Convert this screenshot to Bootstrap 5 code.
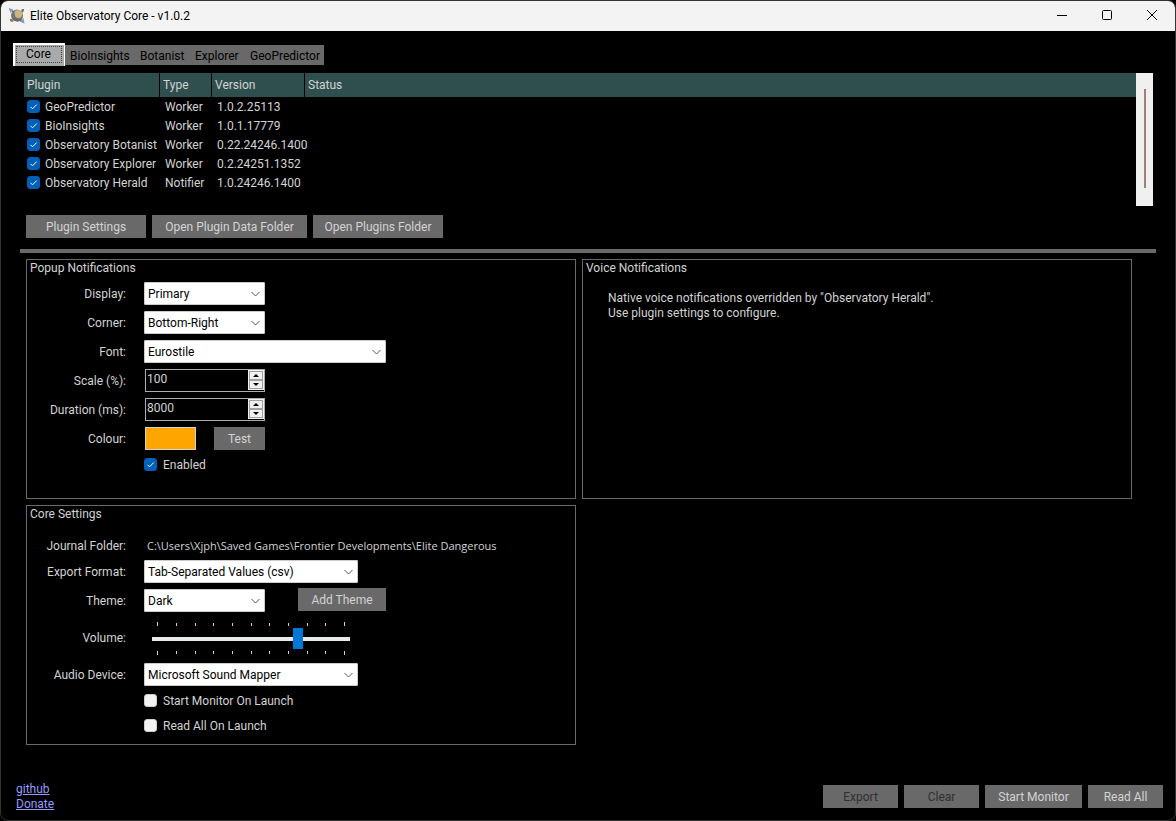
<!DOCTYPE html>
<html lang="en">
<head>
<meta charset="utf-8">
<meta name="viewport" content="width=device-width, initial-scale=1">
<title>Elite Observatory Core - v1.0.2</title>
<link href="https://cdn.jsdelivr.net/npm/bootstrap@5.3.0/dist/css/bootstrap.min.css" rel="stylesheet">
<style>
  html { background: #000; }
  body {
    font-family: Roboto, "Open Sans", sans-serif;
    font-size: 12px;
    line-height: 16px;
    color: #d3d3d3;
    background: #000;
  }
  .app-window { border: 1px solid #333; border-radius: 8px; overflow: hidden; }
  .title-bar { height: 30px; background: #f3f3f3; color: #000; padding: 0 1px 0 8px; }
  .app-icon { margin-right: 5px; }
  .win-btn { width: 45px; height: 30px; border: 0; background: none; padding: 0 0 3px; color: #000; }

  .tab-strip { padding: 12px 12px 0; height: 42px; }
  .tab-strip .nav-link {
    height: 20px; margin-top: 2px; padding: 2px 0 0 5px; border: 0; border-radius: 0;
    background: #696969; color: #000; line-height: 16px; white-space: nowrap; text-align: left;
  }
  .tab-strip .nav-link.active {
    width: 52px; height: 23px; margin: 0; padding: 0 2px 3px 0; background: #a9a9a9; color: #000;
    border: 2px solid #fff; border-right: 1px solid #fff; border-bottom: 0;
    outline: 1px dotted #444; outline-offset: -4px; text-align: center;
  }
  .tab-a { width: 70px; } .tab-b { width: 55px; } .tab-c { width: 55px; } .tab-d { width: 79px; }

  .plugin-area { margin: 0 22px 0 23px; height: 133px; }
  .plugin-table { table-layout: fixed; width: 100%; border-collapse: separate; border-spacing: 0; }
  .plugin-table th {
    height: 24px; padding: 0 3px; font-weight: 400; background: #2f4f4f; border-right: 1px solid #000;
  }
  .plugin-table th:last-child { border-right: 0; }
  .plugin-table td { height: 19px; padding: 0 5px; white-space: nowrap; }
  .plugin-table td:first-child { padding: 0 3px; }
  .plugin-table label { gap: 5px; }
  .scroll-rail { width: 17px; background: #f0f0f0; padding: 16px 0 18px; }
  .scroll-thumb { width: 2px; background: #a08075; }

  .tick {
    appearance: none; width: 13px; height: 13px; margin: 0; border: 1px solid #ccc; border-radius: 3px;
    background: #f3f3f3 center / 11px 11px no-repeat; flex: none;
  }
  .tick:checked {
    border-color: #005fb8; background-color: #005fb8;
    background-image: url("data:image/svg+xml,%3Csvg xmlns='http://www.w3.org/2000/svg' viewBox='0 0 11 11'%3E%3Cpath d='M2.5 5.8 4.5 7.8 8.7 3.6' fill='none' stroke='%23fff' stroke-width='1'/%3E%3C/svg%3E");
  }

  .btn-flat {
    height: 23px; padding: 0; border: 0; border-radius: 0; background: #696969; color: #d3d3d3;
    font-size: 12px; line-height: 24px; white-space: nowrap;
  }
  .btn-flat:disabled { background: #696969; color: #303030; opacity: 1; }
  .btn-flat:hover { background: #777; color: #fff; }
  .w-51 { width: 51px; } .w-75px { width: 75px; } .w-88 { width: 88px; } .w-97 { width: 97px; }
  .w-120 { width: 120px; } .w-130 { width: 130px; } .w-155 { width: 155px; }
  .gap-6 { gap: 6px; }

  .plugin-actions { padding: 9px 25px 11px; }
  .splitter { height: 4px; margin: 0 19px; background: #696969; }

  .panels { padding: 6px 43px 0 25px; }
  .panel-row { --bs-gutter-x: 6px; --bs-gutter-y: 6px; }
  .group-box { min-height: 240px; height: 100%; border: 1px solid #696969; padding: 0 3px; }
  .group-box legend { float: left; width: 100%; font-size: 12px; line-height: 16px; margin: 0; }
  .group-box legend + * { clear: left; }
  .form-grid {
    display: grid; grid-template-columns: 96px minmax(0, 1fr); column-gap: 18px; row-gap: 6px; align-items: center;
  }
  .form-grid > label, .form-grid > .row-label { text-align: right; white-space: nowrap; }
  .popup-grid { padding-top: 6px; }
  .core-grid { padding-top: 15px; }
  .line { display: flex; align-items: center; height: 23px; }
  .journal-line { height: 17px; padding-left: 3px; font-family: "Open Sans", sans-serif; font-size: 11px; }
  .check-line { grid-column: 2; height: 17px; gap: 6px; }
  .check-line + .check-line { margin-top: 2px; }

  .combo {
    appearance: none; height: 23px; padding: 1px 22px 0 3px; border: 1px solid #ccc; border-radius: 1px; color: #000;
    font-size: 12px; line-height: 20px;
    background: #fff url("data:image/svg+xml,%3Csvg xmlns='http://www.w3.org/2000/svg' viewBox='0 0 9 6'%3E%3Cpath d='M.5 1 4.5 5 8.5 1' fill='none' stroke='%23555' stroke-width='1'/%3E%3C/svg%3E") right 4px center / 9px 6px no-repeat;
  }
  .combo-s { width: 121px; } .combo-m { width: 214px; } .combo-l { width: 242px; }
  .theme-btn { margin: 0 0 2px 33px; }

  .spin-box { width: 120px; height: 23px; margin-left: 1px; border: 1px solid #abadb3; }
  .spin-box input {
    appearance: textfield; width: 0; flex: 1; border: 0; padding: 0 0 3px 1px; background: #000; color: #d3d3d3;
    font-size: 12px; line-height: 16px; outline: 0;
  }
  .spin-box input::-webkit-inner-spin-button { appearance: none; margin: 0; }
  .spinner-col { width: 16px; height: 20px; padding: 1px; background: #f0f0f0; }
  .spinner-col button {
    height: 9px; padding: 0; border: 1px solid #a0a0a0; background: #f0f0f0; line-height: 0;
    display: flex; align-items: center; justify-content: center;
  }
  .swatch { appearance: none; width: 51px; height: 23px; padding: 0; margin-left: 1px; margin-right: 18px; border: 1px solid #d3d3d3; background: orange; }
  .swatch::-webkit-color-swatch-wrapper { padding: 0; }
  .swatch::-webkit-color-swatch { border: 0; border-radius: 0; }

  .volume { width: 198px; margin-left: 8px; }
  .volume svg { display: block; }
  .volume input { appearance: none; display: block; width: 198px; height: 21px; margin: 2px 0 0; background: none; }
  .volume input::-webkit-slider-runnable-track { height: 4px; background: #e7eaea; }
  .volume input::-webkit-slider-thumb { appearance: none; width: 10px; height: 21px; margin-top: -9px; background: #0078d7; }

  .voice-text { padding: 15px 22px; line-height: 15px; }
  .bottom-bar { padding: 0 12px 8px 15px; }
  .bottom-bar a { color: #99f; line-height: 15px; }
  .bottom-actions { margin-bottom: 4px; }
</style>
</head>
<body>
<div class="app-window d-flex flex-column min-vh-100">
  <header class="title-bar d-flex align-items-center">
    <svg class="app-icon" width="16" height="16" viewBox="0 0 16 16" aria-hidden="true">
      <path d="M12 3l1-2 2 0 0 2-2 2zM1 11l2 0 2 2-2 1-2-1z" fill="#77777b"/>
      <circle cx="8" cy="7.500" r="6" fill="#8e774f"/>
      <circle cx="9.200" cy="6" r="4" fill="#c9b586"/>
      <path d="M2.500 7q2 4 6 4.500T14 8q-.5 5-5 5.500-6-.5-6.500-6.500" fill="#75664d"/>
      <path d="M.5 1 4 3.500 6 9.500 14.500 14.500" stroke="#5470a8" stroke-width="1.300" fill="none"/>
      <path d="M0 0l4 1.500L1.500 5zM12 13l2.500-3L15.500 16z" fill="#7f9bc4"/>
    </svg>
    <span class="me-auto">Elite Observatory Core - v1.0.2</span>
    <button class="win-btn" aria-label="Minimize"><svg width="10" height="10" viewBox="0 0 10 10"><path d="M0 5.500h10" stroke="#000"/></svg></button>
    <button class="win-btn" aria-label="Maximize"><svg width="10" height="10" viewBox="0 0 10 10"><rect x=".5" y=".5" width="9" height="9" rx="1" fill="none" stroke="#000"/></svg></button>
    <button class="win-btn" aria-label="Close"><svg width="10" height="10" viewBox="0 0 10 10"><path d="M0 0l10 10M10 0L0 10" stroke="#000"/></svg></button>
  </header>

  <nav class="tab-strip d-flex" role="tablist">
    <button class="nav-link active" role="tab" aria-selected="true">Core</button>
    <button class="nav-link tab-a" role="tab">BioInsights</button>
    <button class="nav-link tab-b" role="tab">Botanist</button>
    <button class="nav-link tab-c" role="tab">Explorer</button>
    <button class="nav-link tab-d" role="tab">GeoPredictor</button>
  </nav>

  <main class="flex-grow-1">
    <section class="plugin-area d-flex">
      <div class="flex-fill">
        <table class="plugin-table">
          <colgroup><col style="width:136px"><col style="width:52px"><col style="width:93px"><col></colgroup>
          <thead><tr><th>Plugin</th><th>Type</th><th>Version</th><th>Status</th></tr></thead>
          <tbody>
            <tr><td><label class="d-flex align-items-center"><input type="checkbox" class="tick" checked>GeoPredictor</label></td><td>Worker</td><td>1.0.2.25113</td><td></td></tr>
            <tr><td><label class="d-flex align-items-center"><input type="checkbox" class="tick" checked>BioInsights</label></td><td>Worker</td><td>1.0.1.17779</td><td></td></tr>
            <tr><td><label class="d-flex align-items-center"><input type="checkbox" class="tick" checked>Observatory Botanist</label></td><td>Worker</td><td>0.22.24246.1400</td><td></td></tr>
            <tr><td><label class="d-flex align-items-center"><input type="checkbox" class="tick" checked>Observatory Explorer</label></td><td>Worker</td><td>0.2.24251.1352</td><td></td></tr>
            <tr><td><label class="d-flex align-items-center"><input type="checkbox" class="tick" checked>Observatory Herald</label></td><td>Notifier</td><td>1.0.24246.1400</td><td></td></tr>
          </tbody>
        </table>
      </div>
      <div class="scroll-rail d-flex flex-shrink-0 justify-content-center"><div class="scroll-thumb"></div></div>
    </section>

    <div class="plugin-actions d-flex gap-6">
      <button class="btn btn-flat w-120">Plugin Settings</button>
      <button class="btn btn-flat w-155">Open Plugin Data Folder</button>
      <button class="btn btn-flat w-130">Open Plugins Folder</button>
    </div>
    <div class="splitter"></div>

    <div class="panels">
      <div class="row row-cols-2 panel-row mt-0">
        <div class="col mt-0">
          <fieldset class="group-box">
            <legend>Popup Notifications</legend>
            <div class="form-grid popup-grid">
              <label for="display">Display:</label>
              <div class="line"><select id="display" class="combo combo-s"><option>Primary</option></select></div>
              <label for="corner">Corner:</label>
              <div class="line"><select id="corner" class="combo combo-s"><option>Bottom-Right</option></select></div>
              <label for="font">Font:</label>
              <div class="line"><select id="font" class="combo combo-l"><option>Eurostile</option></select></div>
              <label for="scale">Scale (%):</label>
              <div class="line"><div class="spin-box d-flex"><input id="scale" type="number" value="100">
                <div class="spinner-col d-flex flex-column">
                  <button aria-label="Increase scale"><svg width="6" height="3"><path d="M0 3 3 0l3 3z"/></svg></button>
                  <button aria-label="Decrease scale"><svg width="6" height="3"><path d="M0 0h6L3 3z"/></svg></button>
                </div></div></div>
              <label for="duration">Duration (ms):</label>
              <div class="line"><div class="spin-box d-flex"><input id="duration" type="number" value="8000">
                <div class="spinner-col d-flex flex-column">
                  <button aria-label="Increase duration"><svg width="6" height="3"><path d="M0 3 3 0l3 3z"/></svg></button>
                  <button aria-label="Decrease duration"><svg width="6" height="3"><path d="M0 0h6L3 3z"/></svg></button>
                </div></div></div>
              <label for="colour">Colour:</label>
              <div class="line"><input id="colour" type="color" class="swatch" value="#ffa500"><button class="btn btn-flat w-51">Test</button></div>
              <label class="line check-line"><input type="checkbox" class="tick" checked>Enabled</label>
            </div>
          </fieldset>
        </div>
        <div class="col mt-0">
          <fieldset class="group-box">
            <legend>Voice Notifications</legend>
            <div class="voice-text">Native voice notifications overridden by "Observatory Herald".<br>Use plugin settings to configure.</div>
          </fieldset>
        </div>
        <div class="col">
          <fieldset class="group-box">
            <legend>Core Settings</legend>
            <div class="form-grid core-grid">
              <span class="row-label">Journal Folder:</span>
              <div class="line journal-line"><a href="#" class="text-reset text-decoration-none">C:\Users\Xjph\Saved Games\Frontier Developments\Elite Dangerous</a></div>
              <label for="export">Export Format:</label>
              <div class="line"><select id="export" class="combo combo-m"><option>Tab-Separated Values (csv)</option></select></div>
              <label for="theme">Theme:</label>
              <div class="line"><select id="theme" class="combo combo-s"><option>Dark</option></select><button class="btn btn-flat w-88 theme-btn">Add Theme</button></div>
              <label for="volume">Volume:</label>
              <div class="volume">
                <svg width="198" height="8" viewBox="0 0 198 8"><path d="M5.500 5v4M24.500 6v3M43.500 6v3M61.500 6v3M80.500 6v3M99.500 6v3M117.500 6v3M136.500 6v3M155.500 6v3M173.500 6v3M192.500 5v4" transform="translate(0 -1)" stroke="#d3d3d3"/></svg>
                <input id="volume" type="range" min="0" max="100" value="75">
                <svg width="198" height="8" viewBox="0 0 198 8"><path d="M5.500 2v4M24.500 2v3M43.500 2v3M61.500 2v3M80.500 2v3M99.500 2v3M117.500 2v3M136.500 2v3M155.500 2v3M173.500 2v3M192.500 2v4" stroke="#d3d3d3"/></svg>
              </div>
              <label for="audio">Audio Device:</label>
              <div class="line"><select id="audio" class="combo combo-m"><option>Microsoft Sound Mapper</option></select></div>
              <label class="line check-line"><input type="checkbox" class="tick">Start Monitor On Launch</label>
              <label class="line check-line"><input type="checkbox" class="tick">Read All On Launch</label>
            </div>
          </fieldset>
        </div>
      </div>
    </div>
  </main>

  <footer class="bottom-bar d-flex align-items-end justify-content-between">
    <div class="d-flex flex-column align-items-start"><a href="#">github</a><a href="#">Donate</a></div>
    <div class="bottom-actions d-flex gap-6">
      <button class="btn btn-flat w-75px" disabled>Export</button>
      <button class="btn btn-flat w-75px" disabled>Clear</button>
      <button class="btn btn-flat w-97">Start Monitor</button>
      <button class="btn btn-flat w-75px">Read All</button>
    </div>
  </footer>
</div>
<script src="https://cdn.jsdelivr.net/npm/bootstrap@5.3.0/dist/js/bootstrap.bundle.min.js"></script>
</body>
</html>
